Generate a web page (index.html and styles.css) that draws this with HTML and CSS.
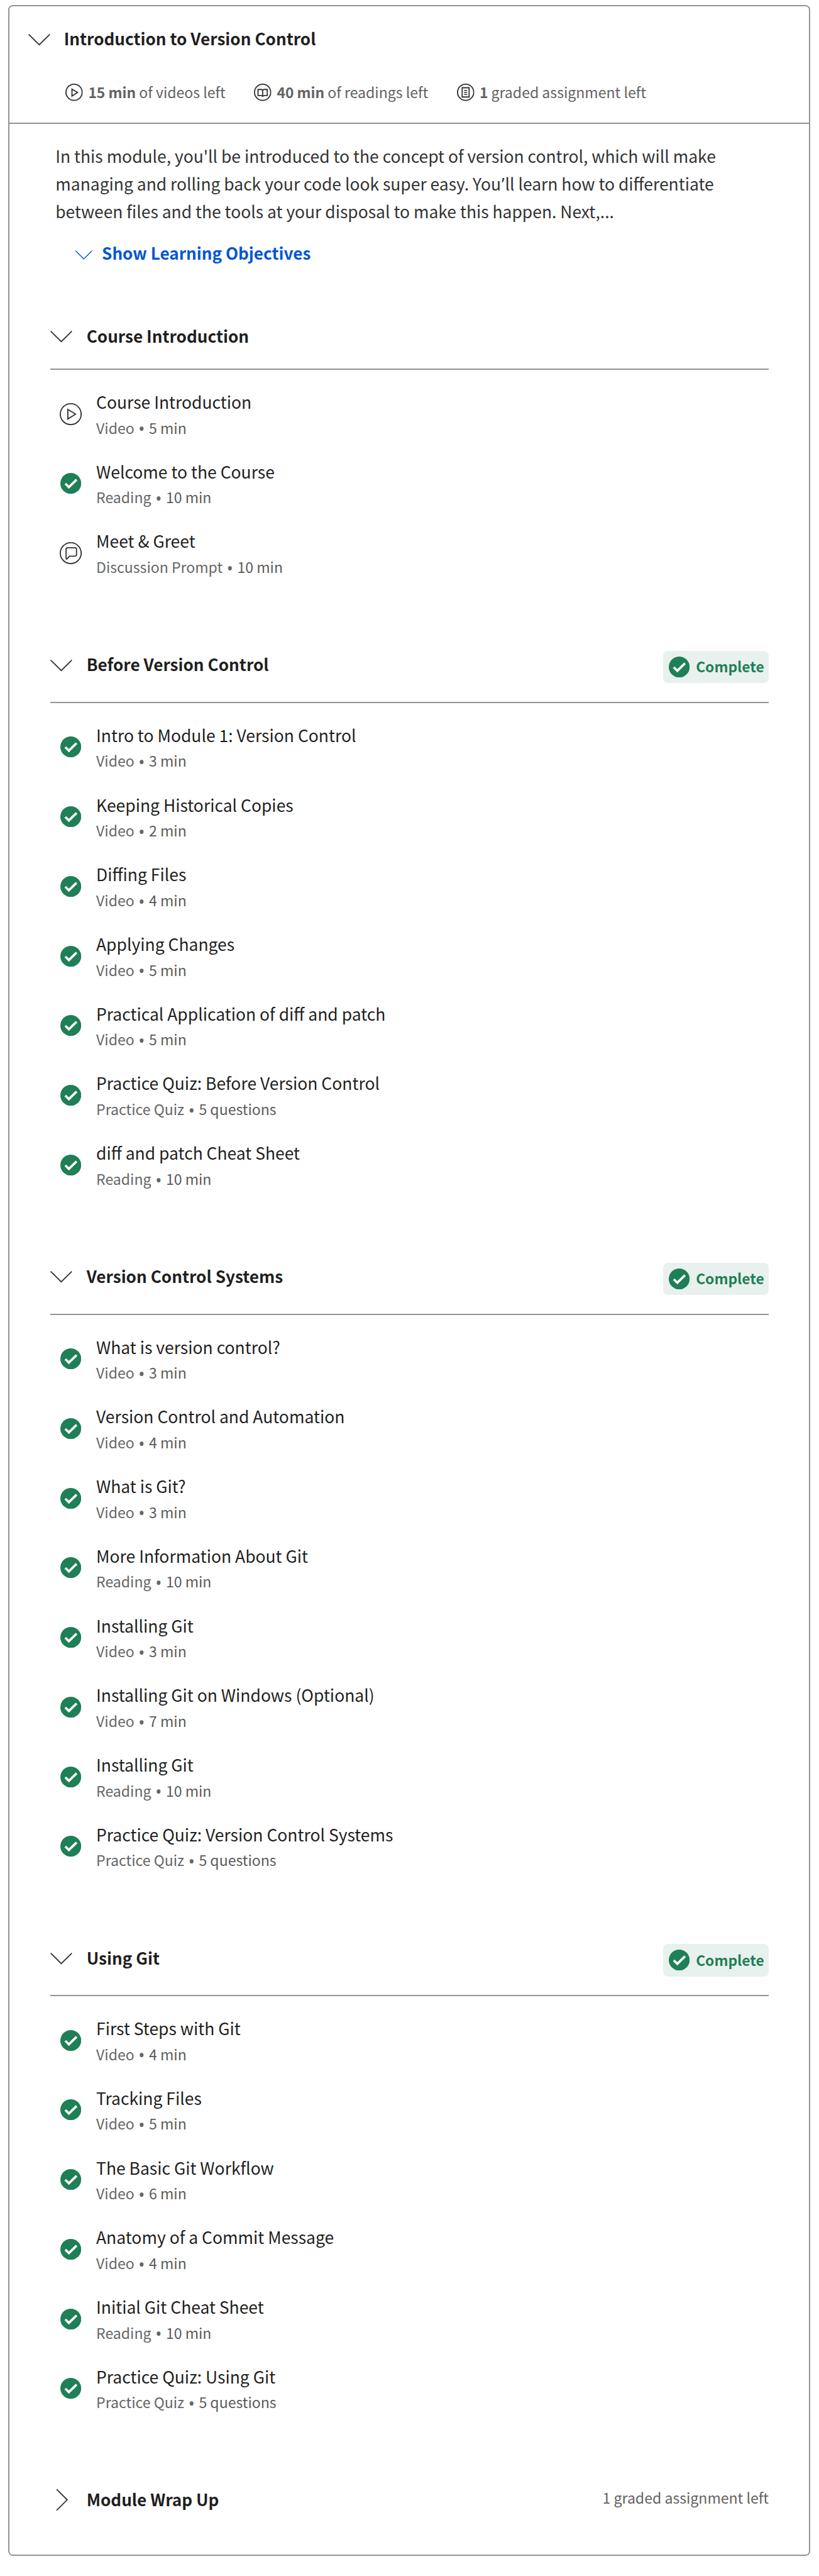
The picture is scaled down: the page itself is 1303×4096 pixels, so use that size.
FILE: index.html
```html
<!DOCTYPE html>
<html lang="en">
<head>
<meta charset="utf-8">
<title>Introduction to Version Control</title>
<link rel="stylesheet" href="styles.css">
</head>
<body>
<svg class="sprite" aria-hidden="true">
  <symbol id="down" viewBox="0 0 40 40"><path d="M1.8 8.2 20 26.3 38.2 8.2" fill="none" stroke="currentColor" stroke-width="2"/></symbol>
  <symbol id="right" viewBox="0 0 40 40"><path d="M12 2.2 30.2 20.4 12 38.6" fill="none" stroke="currentColor" stroke-width="2"/></symbol>
  <symbol id="check" viewBox="0 0 36 36"><circle cx="18" cy="18" r="18" fill="#1f7f55"/><path d="M8.6 18.4l6.1 6.1L28 11.5" fill="none" stroke="#fff" stroke-width="4"/></symbol>
  <symbol id="play" viewBox="0 0 38 38"><g fill="none" stroke="#333" stroke-width="2"><circle cx="19" cy="19" r="18"/><path d="M14 10.8 27.3 19 14 27.4z"/></g></symbol>
  <symbol id="chat" viewBox="0 0 38 38"><g fill="none" stroke="#333" stroke-width="2"><circle cx="19" cy="19" r="18"/><path d="M14 9.7H26a3 3 0 0 1 3 3v8.6a3 3 0 0 1-3 3h-9l-4.6 4.7a.8.8 0 0 1-1.4-.6V12.7a3 3 0 0 1 3-3z"/></g></symbol>
  <symbol id="play-s" viewBox="0 0 30 30"><g fill="none" stroke="#333" stroke-width="2"><circle cx="15" cy="15" r="14"/><path d="M11.4 9.4 21 15.2 11.4 21.4z"/></g></symbol>
  <symbol id="book" viewBox="0 0 30 30"><g fill="none" stroke="#333" stroke-width="2"><circle cx="15" cy="15" r="14"/><path d="M15 11.6Q14.400 10 12.500 10H7V20.500H12.500Q14.500 20.500 15 22.500Q15.500 20.500 17.500 20.500H23V10H17.500Q15.600 10 15 11.600V22"/></g></symbol>
  <symbol id="doc" viewBox="0 0 30 30"><g fill="none" stroke="#333" stroke-width="2"><circle cx="15" cy="15" r="14"/><path d="M9 7H21V23H9z"/><path d="M12.300 11.700h5.400M12.300 15.200h5.400M12.300 18.700h5.400" stroke-width="1.600"/></g></symbol>
</svg>

<main class="module">
  <header class="module-head">
    <div class="heading">
      <svg class="chevron"><use href="#down"/></svg>
      <h1>Introduction to Version Control</h1>
    </div>
    <div class="stats">
      <div class="stat"><svg><use href="#play-s"/></svg><p><b>15 min</b> of videos left</p></div>
      <div class="stat"><svg><use href="#book"/></svg><p><b>40 min</b> of readings left</p></div>
      <div class="stat"><svg><use href="#doc"/></svg><p><b>1</b> graded assignment left</p></div>
    </div>
  </header>

  <p class="description">In this module, you'll be introduced to the concept of version control, which will make<br>managing and rolling back your code look super easy. You<span class="apos">’</span>ll learn how to differentiate<br>between files and the tools at your disposal to make this happen. Next,...</p>
  <a class="toggle"><svg><use href="#down"/></svg>Show Learning Objectives</a>

  <section class="lesson">
    <div class="lesson-head"><svg class="chevron"><use href="#down"/></svg><h2>Course Introduction</h2></div>
    <ul>
      <li><svg class="open"><use href="#play"/></svg><div><h3>Course Introduction</h3><p>Video<i>•</i><span>5 min</span></p></div></li>
      <li><svg><use href="#check"/></svg><div><h3>Welcome to the Course</h3><p>Reading<i>•</i><span>10 min</span></p></div></li>
      <li><svg class="open"><use href="#chat"/></svg><div><h3>Meet &amp; Greet</h3><p>Discussion Prompt<i>•</i><span>10 min</span></p></div></li>
    </ul>
  </section>

  <section class="lesson">
    <div class="lesson-head"><svg class="chevron"><use href="#down"/></svg><h2>Before Version Control</h2><span class="badge"><svg><use href="#check"/></svg>Complete</span></div>
    <ul>
      <li><svg><use href="#check"/></svg><div><h3>Intro to Module 1: Version Control</h3><p>Video<i>•</i><span>3 min</span></p></div></li>
      <li><svg><use href="#check"/></svg><div><h3>Keeping Historical Copies</h3><p>Video<i>•</i><span>2 min</span></p></div></li>
      <li><svg><use href="#check"/></svg><div><h3>Diffing Files</h3><p>Video<i>•</i><span>4 min</span></p></div></li>
      <li><svg><use href="#check"/></svg><div><h3>Applying Changes</h3><p>Video<i>•</i><span>5 min</span></p></div></li>
      <li><svg><use href="#check"/></svg><div><h3>Practical Application of diff and patch</h3><p>Video<i>•</i><span>5 min</span></p></div></li>
      <li><svg><use href="#check"/></svg><div><h3>Practice Quiz: Before Version Control</h3><p>Practice Quiz<i>•</i><span>5 questions</span></p></div></li>
      <li><svg><use href="#check"/></svg><div><h3>diff and patch Cheat Sheet</h3><p>Reading<i>•</i><span>10 min</span></p></div></li>
    </ul>
  </section>

  <section class="lesson">
    <div class="lesson-head"><svg class="chevron"><use href="#down"/></svg><h2>Version Control Systems</h2><span class="badge"><svg><use href="#check"/></svg>Complete</span></div>
    <ul>
      <li><svg><use href="#check"/></svg><div><h3>What is version control?</h3><p>Video<i>•</i><span>3 min</span></p></div></li>
      <li><svg><use href="#check"/></svg><div><h3>Version Control and Automation</h3><p>Video<i>•</i><span>4 min</span></p></div></li>
      <li><svg><use href="#check"/></svg><div><h3>What is Git?</h3><p>Video<i>•</i><span>3 min</span></p></div></li>
      <li><svg><use href="#check"/></svg><div><h3>More Information About Git</h3><p>Reading<i>•</i><span>10 min</span></p></div></li>
      <li><svg><use href="#check"/></svg><div><h3>Installing Git</h3><p>Video<i>•</i><span>3 min</span></p></div></li>
      <li><svg><use href="#check"/></svg><div><h3>Installing Git on Windows (Optional)</h3><p>Video<i>•</i><span>7 min</span></p></div></li>
      <li><svg><use href="#check"/></svg><div><h3>Installing Git</h3><p>Reading<i>•</i><span>10 min</span></p></div></li>
      <li><svg><use href="#check"/></svg><div><h3>Practice Quiz: Version Control Systems</h3><p>Practice Quiz<i>•</i><span>5 questions</span></p></div></li>
    </ul>
  </section>

  <section class="lesson">
    <div class="lesson-head"><svg class="chevron"><use href="#down"/></svg><h2>Using Git</h2><span class="badge"><svg><use href="#check"/></svg>Complete</span></div>
    <ul>
      <li><svg><use href="#check"/></svg><div><h3>First Steps with Git</h3><p>Video<i>•</i><span>4 min</span></p></div></li>
      <li><svg><use href="#check"/></svg><div><h3>Tracking Files</h3><p>Video<i>•</i><span>5 min</span></p></div></li>
      <li><svg><use href="#check"/></svg><div><h3>The Basic Git Workflow</h3><p>Video<i>•</i><span>6 min</span></p></div></li>
      <li><svg><use href="#check"/></svg><div><h3>Anatomy of a Commit Message</h3><p>Video<i>•</i><span>4 min</span></p></div></li>
      <li><svg><use href="#check"/></svg><div><h3>Initial Git Cheat Sheet</h3><p>Reading<i>•</i><span>10 min</span></p></div></li>
      <li><svg><use href="#check"/></svg><div><h3>Practice Quiz: Using Git</h3><p>Practice Quiz<i>•</i><span>5 questions</span></p></div></li>
    </ul>
  </section>

  <section class="lesson">
    <div class="lesson-head collapsed"><svg class="chevron"><use href="#right"/></svg><h2>Module Wrap Up</h2><p class="remaining">1 graded assignment left</p></div>
  </section>
</main>
</body>
</html>
```
FILE: styles.css
```css
* { box-sizing: border-box; margin: 0; padding: 0; }

html { font-size: 9.229px; }

body {
  background: #fff;
  color: #1f1f1f;
  font-family: "Noto Sans CJK SC", "Noto Sans", sans-serif;
  font-size: 2.865rem;
  line-height: 4.8rem;
  white-space: nowrap;
}

svg { display: block; flex: none; }
.sprite { position: absolute; width: 0; height: 0; }
ul { list-style: none; }

.module {
  width: 138.3rem;
  height: 439.4rem;
  margin: 0.9rem 0 0 1.4rem;
  border: 2px solid #8f959b;
  border-radius: 0.8rem;
}

.module-head {
  height: 20.2rem;
  padding: 3.05rem 0 0 3.2rem;
  border-bottom: 2px solid #8f959b;
}

.heading { display: flex; gap: 2.2rem; height: 4.8rem; }
.chevron { width: 4rem; height: 4rem; margin-top: 0.9rem; color: #333; }

h1, h2 {
  padding-top: 0.1rem;
  font-size: 2.835rem;
  line-height: 4.8rem;
  font-weight: 700;
}

.stats { display: flex; gap: 4.95rem; margin: 4.75rem 0 0 6.5rem; }
.stat {
  display: flex;
  gap: 0.9rem;
  color: #636363;
  font-size: 2.5rem;
  line-height: 4.2rem;
}
.stat svg { width: 3rem; height: 3rem; margin-top: 0.7rem; }
.stat b { font-size: 2.475rem; }

.description {
  margin: 3.15rem 0 2.35rem 7.95rem;
  color: #333;
}
.apos { padding: 0 0.1rem; font-family: "Noto Sans", sans-serif; line-height: 1; }

.toggle {
  display: flex;
  gap: 1.6rem;
  margin-left: 11.25rem;
  color: #0056d2;
  font-size: 2.83rem;
  font-weight: 700;
}
.toggle svg { width: 3.1rem; height: 3.1rem; margin-top: 1.35rem; }

.lesson { width: 123.9rem; margin: 10.65rem 0 0 7rem; }
.toggle + .lesson { margin-top: 9.35rem; }

.lesson-head {
  display: flex;
  align-items: flex-start;
  gap: 2.35rem;
  padding-bottom: 3.2rem;
  border-bottom: 2px solid #8f959b;
}
.lesson-head h2 { height: 4.95rem; }
.lesson-head .chevron { margin-left: -0.05rem; }
.lesson-head.collapsed { border-bottom: 0; }
.collapsed .chevron { margin-top: 0.5rem; }
.collapsed h2 { padding-top: 0; }

.badge {
  display: flex;
  gap: 1.05rem;
  width: 18.2rem;
  height: 5.6rem;
  margin: 0.15rem 0 0 auto;
  padding: 0.6rem 0 0 1rem;
  border-radius: 0.8rem;
  background: #e8f1ee;
  color: #1f7f55;
  font-size: 2.475rem;
  font-weight: 700;
  line-height: 4.3rem;
}
.badge svg { width: 3.6rem; height: 3.6rem; margin-top: 0.4rem; }

.remaining {
  margin-left: auto;
  color: #636363;
  font-size: 2.5rem;
  line-height: 4.2rem;
}

.lesson ul { padding-top: 1.6rem; }
.lesson li {
  display: flex;
  align-items: center;
  gap: 2.57rem;
  height: 12rem;
  padding-left: 1.8rem;
}
.lesson li svg { width: 3.6rem; height: 3.6rem; }
.lesson li .open { width: 3.8rem; height: 3.8rem; margin: 0 -0.1rem; }
.lesson li > div { align-self: flex-start; padding-top: 1.85rem; }
.lesson h3 { font-size: 2.87rem; font-weight: 400; line-height: 4.2rem; }
.lesson li p {
  display: flex;
  margin-top: 0.2rem;
  color: #666;
  font-size: 2.5rem;
  line-height: 4.2rem;
}
.lesson li i {
  margin: 0.3rem 0.72rem 0;
  font-family: "Noto Sans", sans-serif;
  font-size: 2.9rem;
  font-style: normal;
}
.lesson li span { color: #5b5b5b; }
```
